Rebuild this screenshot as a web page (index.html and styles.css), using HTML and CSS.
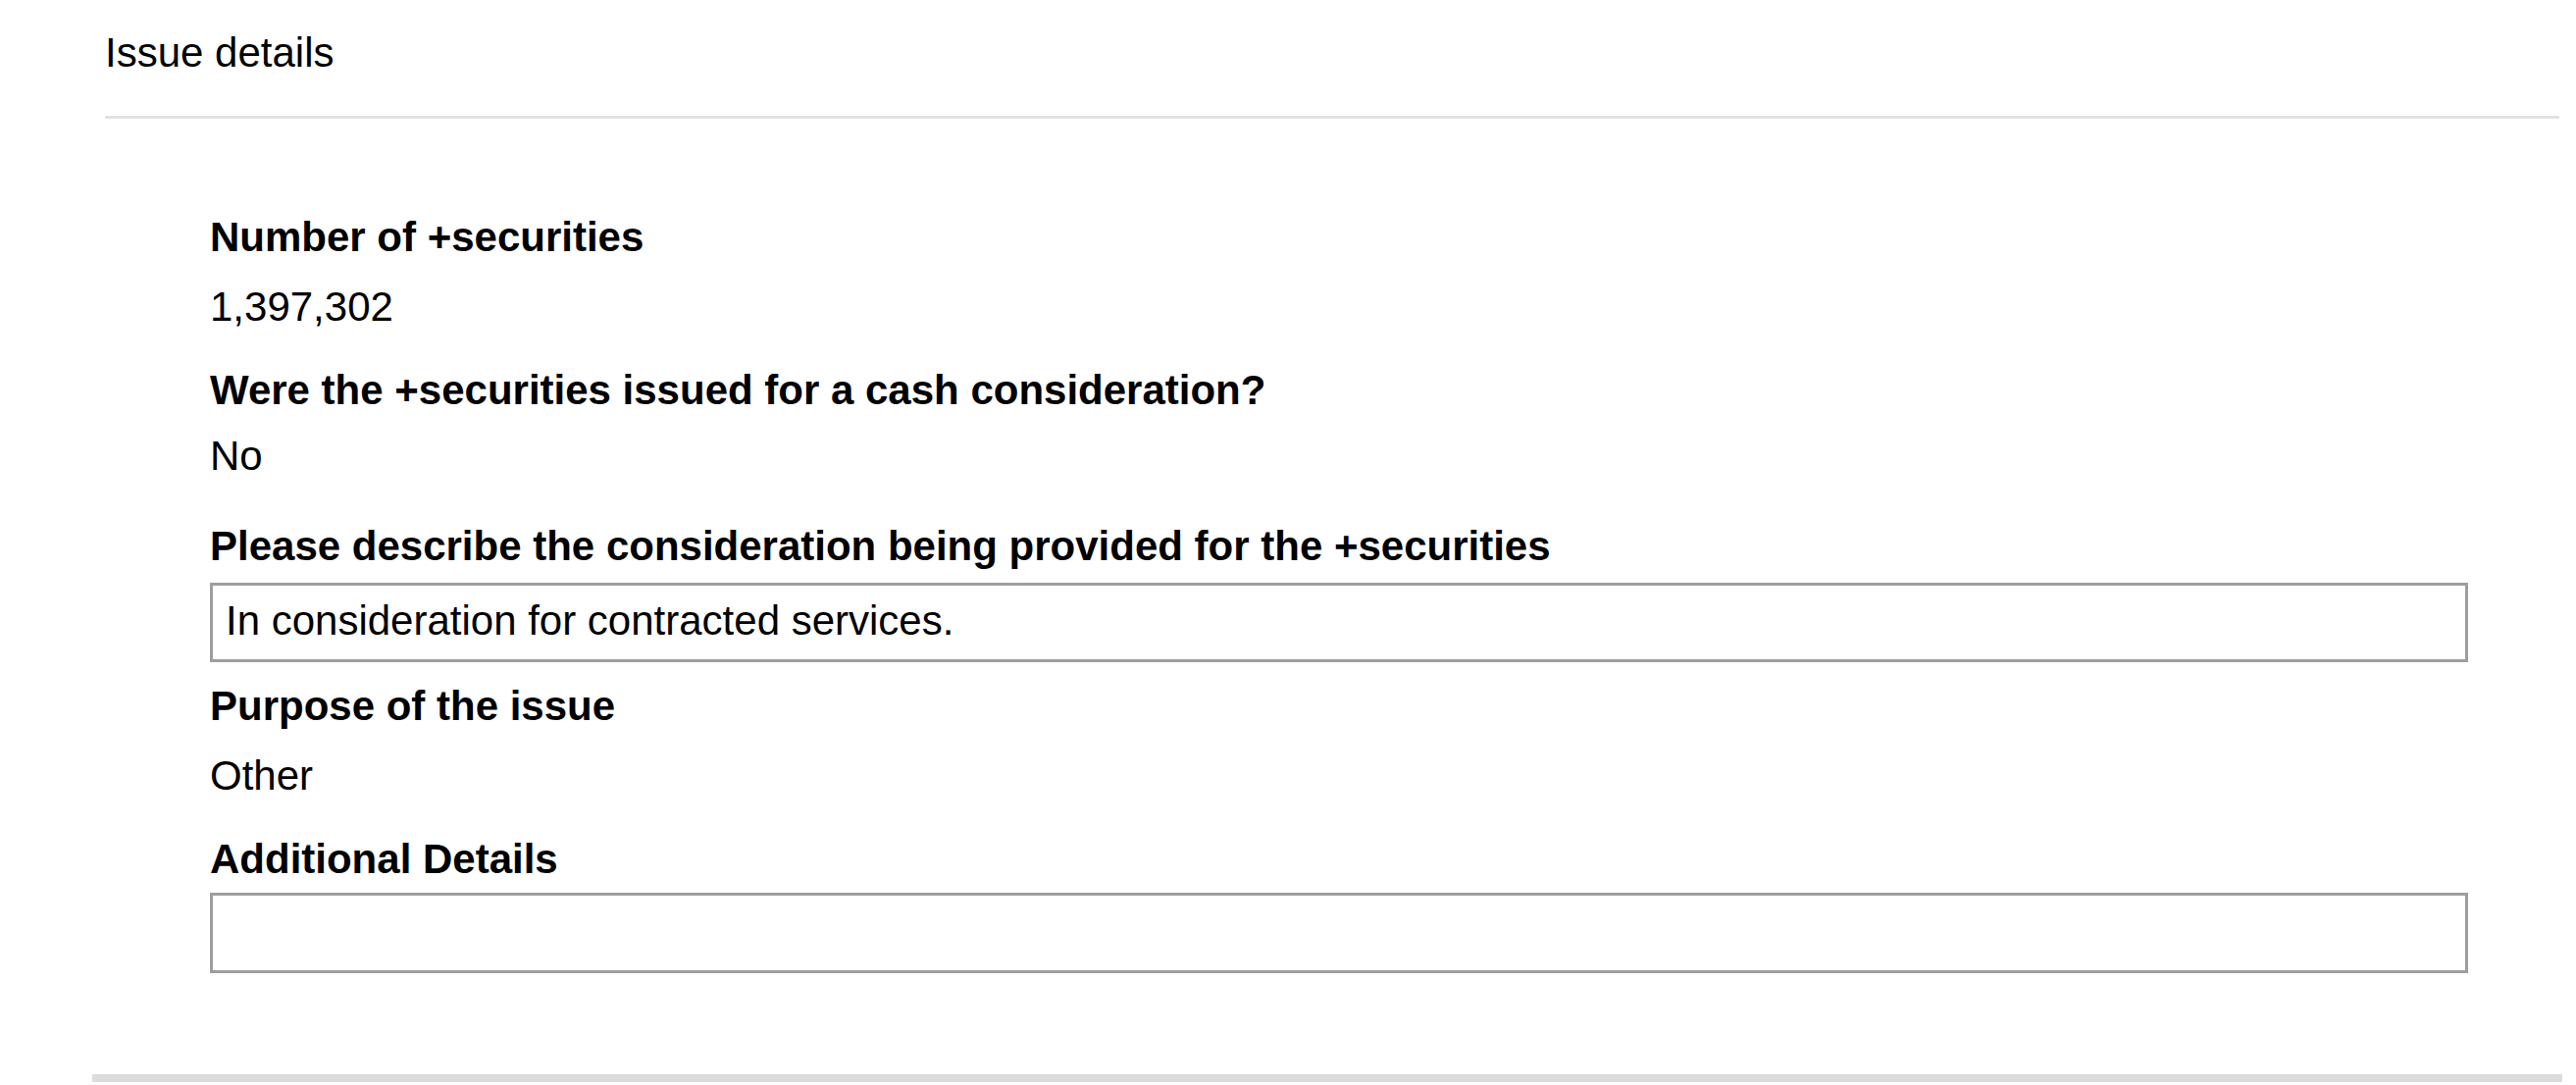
FILE: index.html
```html
<!DOCTYPE html>
<html lang="en">
<head>
<meta charset="utf-8">
<title>Issue details</title>
<link rel="stylesheet" href="styles.css">
</head>
<body>
<div class="page">
  <section class="panel">
    <header class="panel-head">
      <h2 class="panel-title">Issue details</h2>
    </header>
    <div class="panel-body">
      <div class="field">
        <div class="field-label">Number of +securities</div>
        <div class="field-value">1,397,302</div>
      </div>
      <div class="field">
        <div class="field-label">Were the +securities issued for a cash consideration?</div>
        <div class="field-value field-value--choice">No</div>
      </div>
      <div class="field">
        <div class="field-label">Please describe the consideration being provided for the +securities</div>
        <div class="field-box">In consideration for contracted services.</div>
      </div>
      <div class="field">
        <div class="field-label">Purpose of the issue</div>
        <div class="field-value">Other</div>
      </div>
      <div class="field">
        <div class="field-label">Additional Details</div>
        <div class="field-box field-box--empty"></div>
      </div>
    </div>
  </section>
  <div class="panel-divider"></div>
</div>
</body>
</html>
```

FILE: styles.css
```css
html, body {
  margin: 0;
  padding: 0;
  background: #ffffff;
}

body {
  font-family: "Liberation Sans", Arial, sans-serif;
  font-size: 42px;
  line-height: 48px;
  color: #000000;
}

.page {
  width: 2626px;
  height: 1106px;
  overflow: hidden;
}

.panel {
  padding: 0 17px 0 107px;
}

.panel-head {
  padding: 30px 0 40px;
  border-bottom: 3px solid #e2e2e2;
}

.panel-title {
  margin: 0;
  font-size: 42px;
  font-weight: normal;
  line-height: 48px;
}

.panel-body {
  padding: 97px 93px 0 107px;
}

.field {
  display: flex;
  flex-direction: column;
}

.field-label {
  font-weight: bold;
  line-height: 48px;
}

.field-value {
  margin-top: 23px;
  margin-bottom: 37px;
  line-height: 48px;
}

.field-value--choice {
  margin-top: 19px;
  margin-bottom: 44px;
}

.field-box {
  box-sizing: border-box;
  height: 81px;
  margin-top: 13px;
  margin-bottom: 21px;
  padding: 12px 13px;
  border: 3px solid #9e9e9e;
  line-height: 48px;
}

.field-box--empty {
  height: 82px;
  margin-top: 10px;
  margin-bottom: 0;
}

.panel-divider {
  height: 8px;
  margin: 103px 14px 0 94px;
  background: #dcdcdc;
}
```
